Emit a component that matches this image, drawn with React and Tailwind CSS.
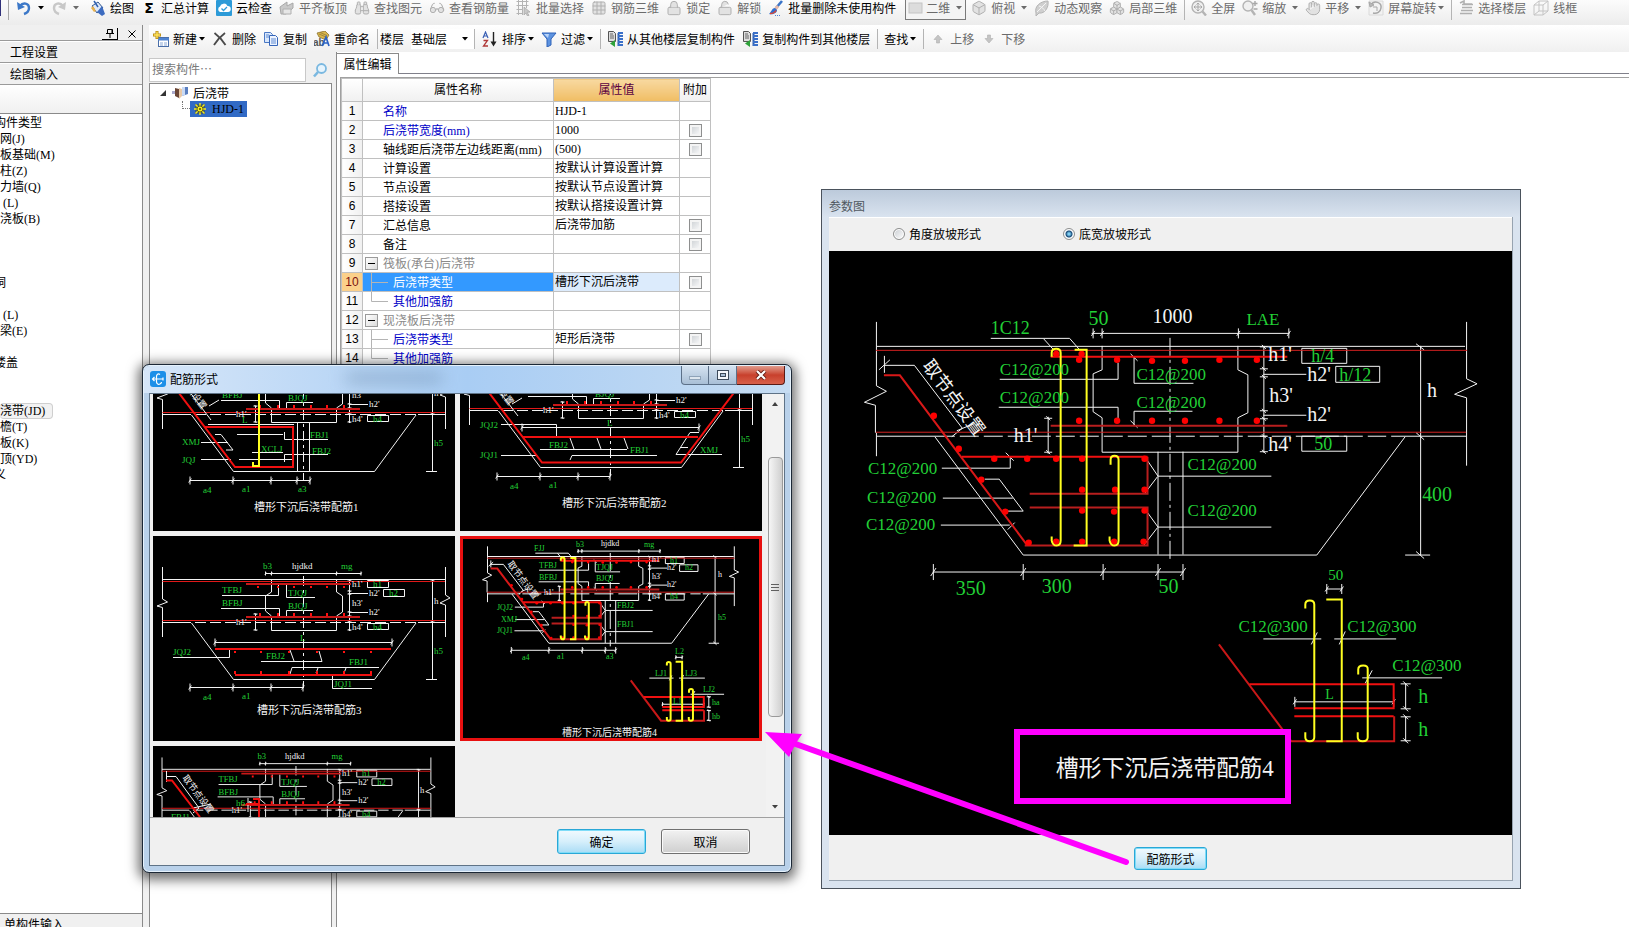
import React, { useState } from 'react'
import { Box, Boxes, Binoculars, Glasses, Grid3x3, Lock, LockOpen, Hand } from 'lucide-react'

/* ---------- small icons ---------- */

const Caret = ({ className = '' }) => (
  <svg viewBox="0 0 6 4" className={`h-1 w-1.5 shrink-0 ${className}`} aria-hidden="true">
    <path d="M0 0h6L3 3.6z" fill="currentColor" />
  </svg>
)

const Svg = ({ children }) => (
  <svg viewBox="0 0 16 16" className="size-4 shrink-0" aria-hidden="true">{children}</svg>
)

const UndoIcon = ({ color }) => (
  <Svg>
    <path d="M4 6c3-4 9-3 9 2 0 3-2 5-5 6" fill="none" stroke={color} strokeWidth="2.4" />
    <path d="M1 2l1 8 7-3z" fill={color} />
  </Svg>
)
const RedoIcon = ({ color }) => (
  <Svg>
    <path d="M12 6C9 2 3 3 3 8c0 3 2 5 5 6" fill="none" stroke={color} strokeWidth="2.4" />
    <path d="M15 2l-1 8-7-3z" fill={color} />
  </Svg>
)
const PaintIcon = () => (
  <Svg>
    <path d="M2 6l6-4 5 6-6 5z" fill="#dfe9f8" stroke="#33588f" />
    <path d="M4 1l4 6" stroke="#2d5fb0" strokeWidth="1.5" />
    <path d="M7 12l5-6 3 8-3 2z" fill="#3d6cc0" />
    <path d="M1 8l3 4 2-1-3-5z" fill="#e8b04a" />
  </Svg>
)
const CloudCheckIcon = () => (
  <Svg>
    <rect width="16" height="16" rx="1" fill="#2d9bd8" />
    <path d="M4 12a3 3 0 010-5.500 4 4 0 017.500-.5A3 3 0 0112 12z" fill="#fff" />
    <path d="M5.500 8.500l2 2 3.500-3.500" fill="none" stroke="#2d9bd8" strokeWidth="1.300" />
  </Svg>
)
const BrushIcon = () => (
  <Svg>
    <path d="M14 1L8 8" stroke="#3a74c8" strokeWidth="2.600" />
    <path d="M10 6L7 9.500" stroke="#e6b8a8" strokeWidth="3" />
    <path d="M7 8c-3 0-3 3-6 6 4 1 8-1 8-4z" fill="#2f6fd0" />
    <path d="M2 13.500c3 0 5-1 6-3" stroke="#d6483a" strokeWidth="1.600" fill="none" />
    <path d="M7 15.500h6" stroke="#4a86dc" strokeDasharray="1 1" />
  </Svg>
)
const SlabIcon = () => (
  <Svg>
    <path d="M1 7l7-5v4l6-3v5l-7 6H2z" fill="#c9c9c9" stroke="#a8a8a8" />
    <path d="M4 9h8v5H4z" fill="#e6e6e6" stroke="#b0b0b0" />
  </Svg>
)
const BatchSelectIcon = () => (
  <Svg>
    <path d="M.5 1.500h12M.5 5.500h12M.5 9.500h6M.5 13.500h6M2.500 0v15M6.500 0v15M10.500 0v8" stroke="#b4b4b4" fill="none" />
    <path d="M8 7l6 5-3 .3 2 3-1.500.7-1.700-3-1.800 2z" fill="#c8c8c8" stroke="#a4a4a4" strokeWidth=".7" />
  </Svg>
)
const ObserveIcon = () => (
  <Svg>
    <path d="M2 13C0 6 7 1 14 1c1 6-3 13-9 12l-3 3z" fill="#cfcfcf" stroke="#b4b4b4" />
    <path d="M3 12C6 9 9 6 12 3M5 6c3 1 5 3 6 5" stroke="#f4f4f4" fill="none" />
  </Svg>
)
const FullScreenIcon = () => (
  <Svg>
    <circle cx="7" cy="7" r="6" fill="#f0f0f0" stroke="#b4b4b4" strokeWidth="1.400" />
    <path d="M7 3v8M3 7h8M5.500 4.500L7 3l1.500 1.500M5.500 9.500L7 11l1.500-1.500M4.500 5.500L3 7l1.500 1.500M9.500 5.500L11 7 9.500 8.500" stroke="#a8a8a8" fill="none" />
    <path d="M11.500 11.500l3.500 4" stroke="#b4b4b4" strokeWidth="2.400" />
  </Svg>
)
const ZoomIcon = () => (
  <Svg>
    <circle cx="6" cy="6" r="5" fill="#f0f0f0" stroke="#b4b4b4" strokeWidth="1.400" />
    <path d="M9.500 10l3.500 5" stroke="#b4b4b4" strokeWidth="2.400" />
    <path d="M13 1v5M10.500 3.500h5M11.500 9h4" stroke="#a8a8a8" strokeWidth="1.400" />
  </Svg>
)
const RotateIcon = () => (
  <Svg>
    <path d="M1 1h14v14H1z" fill="#f2f2f2" stroke="#dadada" />
    <path d="M3 5c3-5 11-3 10 3-.5 4-4 6-8 5" fill="none" stroke="#a8a8a8" strokeWidth="1.500" />
    <path d="M1 2l1 5 4-2zM5 7h4M9 7v4" stroke="#a8a8a8" fill="#b8b8b8" />
  </Svg>
)
const FloorSelectIcon = () => (
  <Svg>
    <path d="M2 3l4-2v3l8 0M4 4.500h11M4 7.500h10M3 10.500h12M2 13.500h12" fill="none" stroke="#b0b0b0" strokeWidth="1.600" />
  </Svg>
)
const WireIcon = () => (
  <Svg>
    <path d="M1 5h9v10H1zM6 1h9v10H6zM1 5l5-4M10 5l5-4M10 15l5-4M1 15l5-4" fill="none" stroke="#c4c4c4" />
  </Svg>
)
const NewIcon = () => (
  <Svg>
    <rect x="5.500" y="6.500" width="10" height="9" fill="#fff" stroke="#4a6ea8" />
    <path d="M5 7h11v2.500H5z" fill="#4f83d0" />
    <path d="M7 12h3M11 12h3M7 14h3M11 14h3" stroke="#8aa8d6" />
    <path d="M4 0v8M0 4h8" stroke="#b88a10" strokeWidth="3" />
    <path d="M4 .8v6.400M.8 4h6.400" stroke="#ffe45c" strokeWidth="1.400" />
  </Svg>
)
const DeleteIcon = () => (
  <Svg>
    <path d="M2.500 2c4 3 8 7 11 12M13 2C9 5 5 9 2 14" stroke="#4a4a4a" strokeWidth="1.800" fill="none" />
  </Svg>
)
const CopyIcon = () => (
  <Svg>
    <path d="M1.500 1.500h6l2 2v8h-8z" fill="#d9e7fb" stroke="#4a78c4" />
    <path d="M6.500 4.500h6l2 2v8h-8z" fill="#eef4ff" stroke="#3565b8" />
    <path d="M8 8h5M8 10h5M8 12h5M3 4h3M3 6h3" stroke="#5f8bd2" />
  </Svg>
)
const RenameIcon = () => (
  <Svg>
    <path d="M3 2l8-2 4 4-3 5-7-3z" fill="#d8b64c" stroke="#8d7430" strokeWidth=".8" />
    <path d="M5 3l7 3M6 1.500l7 3" stroke="#8d7430" strokeWidth=".7" />
    <text x="-1" y="15" fontSize="10" fontWeight="bold" fontFamily="Liberation Sans" fill="#555">ab</text>
    <path d="M8 15l4-9 3 9M9.500 12h5" stroke="#2b62c4" strokeWidth="1.700" fill="none" />
  </Svg>
)
const SortIcon = () => (
  <Svg>
    <path d="M1 7l2.500-6L6 7M2 5h3" stroke="#3a5fb4" strokeWidth="1.200" fill="none" />
    <path d="M1.500 9.500h4l-4 5.500h4.500" stroke="#b03a3a" strokeWidth="1.300" fill="none" />
    <path d="M11.500 1v12" stroke="#222" strokeWidth="1.400" />
    <path d="M8.500 10.500h6l-3 5z" fill="#222" />
  </Svg>
)
const FilterIcon = () => (
  <Svg>
    <path d="M1 2h14L10 8v6l-4 2V8z" fill="#5d93e0" stroke="#2e62b8" />
    <path d="M3 3h5l-1 4z" fill="#b9d4f8" />
  </Svg>
)
const FloorCopyIcon = () => (
  <Svg>
    <path d="M1.500 .5h5l2 2v8h-7z" fill="#ddd" stroke="#555" />
    <path d="M3 3h3M3 5h4M3 7h4" stroke="#666" />
    <path d="M11.500 2v13" stroke="#2f5fb0" strokeWidth="2" />
    <path d="M11 2h5M11 5h5M11 8h5M11 11h5M11 14h5" stroke="#3a6fc8" strokeWidth="1.800" />
    <path d="M8 9v7l-5-3.500z" fill="#2fa33a" />
  </Svg>
)
const ArrowIcon = ({ down }) => (
  <Svg>
    <path d={down ? 'M8 12L4 7.500h2.500V4h3v3.500H12z' : 'M8 4l4 4.500H9.500V12h-3V8.500H4z'} fill="#c4c4c4" stroke="#b0b0b0" strokeWidth=".6" />
  </Svg>
)
const CategoryIcon = () => (
  <Svg>
    <path d="M0 6h3v3H0z" fill="#aac" />
    <path d="M3 3l4 1v9l-4-2z" fill="#6a4636" />
    <path d="M7 3l3 1v7l-3 3z" fill="#e8c9a8" />
    <path d="M10 2h6v7l-6 2z" fill="#5a7fc0" />
    <path d="M10 2h3v8l-3 1z" fill="#c9daf5" />
  </Svg>
)
const SunIcon = () => (
  <svg viewBox="0 0 12 12" className="size-3 shrink-0" aria-hidden="true">
    <rect x="1" y="1" width="10" height="10" fill="#4a4a20" opacity=".5" />
    <path d="M6 0v12M0 6h12M1.500 1.500l9 9M10.500 1.500l-9 9" stroke="#f6ee1e" strokeWidth="1.400" />
    <circle cx="6" cy="6" r="3" fill="#f6ee1e" stroke="#4a4a10" strokeWidth=".8" />
    <circle cx="6" cy="6" r="1" fill="#4a4a10" />
  </svg>
)
const SearchIcon = () => (
  <Svg>
    <circle cx="9.500" cy="6.500" r="4.500" fill="#e6f4fd" stroke="#7ab8e0" strokeWidth="1.800" />
    <path d="M6 10l-4 4.500" stroke="#7ab8e0" strokeWidth="2.600" />
  </Svg>
)
const AppIcon = () => (
  <Svg>
    <rect width="16" height="16" rx="3" fill="#1c8fe8" />
    <path d="M10 3.500c-2-1.500-3.500 0-3.500 2v5c0 2 1.500 3.500 3.500 2.500 1-.5 1.500-1.500 1.500-2M2.500 8h10.500M4.500 6L2.500 8l2 2M13 6.500v3" fill="none" stroke="#fff" strokeWidth="1.200" />
  </Svg>
)

/* ---------- toolbars ---------- */

const Tool = ({ icon, label, caret, caretGap = 'ml-1.5', muted, name }) => (
  <button
    type="button"
    aria-label={label ? undefined : name}
    className={`flex h-4 shrink-0 items-center whitespace-nowrap ${muted ? 'text-[#6b6b6b]' : 'text-black'}`}
  >
    {icon}
    {label && <span className={icon ? 'ml-1' : ''}>{label}</span>}
    {caret && <Caret className={caretGap} />}
  </button>
)

const Sep = () => <span className="-mr-px h-5 w-px shrink-0 bg-[#b4b4b4]" />

const gray = (Icon) => <Icon size={16} strokeWidth={1.500} color="#b0b0b0" fill="#e2e2e2" className="shrink-0" aria-hidden="true" />

const ViewToolbar = () => (
  <header className="flex h-[25px] shrink-0 items-start gap-[7px] bg-gradient-to-b from-[#fcfcfc] to-[#ececec]">
    <div className="flex items-start gap-[7px] pr-1">
      <span className="h-4 w-px bg-[#31317a]" />
      <span className="h-5 w-px bg-[#a8a8a8]" />
      <Tool icon={<UndoIcon color="#3c78c8" />} name="撤销" caret />
      <Tool icon={<RedoIcon color="#c8c8c8" />} name="恢复" caret muted />
    </div>
    <Tool icon={<PaintIcon />} label="绘图" />
    <Tool icon={<span className="w-4 text-center font-['DejaVu_Sans',sans-serif] text-sm font-bold">Σ</span>} label="汇总计算" />
    <Tool icon={<CloudCheckIcon />} label="云检查" />
    <Tool icon={<SlabIcon />} label="平齐板顶" muted />
    <Tool icon={gray(Binoculars)} label="查找图元" muted />
    <Tool icon={gray(Glasses)} label="查看钢筋量" muted />
    <Tool icon={<BatchSelectIcon />} label="批量选择" muted />
    <Tool icon={gray(Grid3x3)} label="钢筋三维" muted />
    <Tool icon={gray(Lock)} label="锁定" muted />
    <Tool icon={gray(LockOpen)} label="解锁" muted />
    <Tool icon={<BrushIcon />} label="批量删除未使用构件" />
    <button type="button" className="-mr-0.5 ml-0.5 flex h-5 w-[61px] shrink-0 items-start border border-t-0 border-[#7a7a7a] bg-[#f4f4f4] pl-0.5 text-[#6b6b6b]">
      <Svg><rect x="1" y="3" width="13" height="10" fill="#dcdcdc" stroke="#c4c4c4" /></Svg>
      <span className="ml-0.5">二维</span>
      <Caret className="mt-1.5 ml-1.5" />
    </button>
    <Tool icon={gray(Box)} label="俯视" caret muted />
    <Tool icon={<ObserveIcon />} label="动态观察" muted />
    <Tool icon={gray(Boxes)} label="局部三维" muted />
    <Sep />
    <Tool icon={<FullScreenIcon />} label="全屏" muted />
    <Tool icon={<ZoomIcon />} label="缩放" caret muted />
    <Tool icon={gray(Hand)} label="平移" caret muted />
    <Tool icon={<RotateIcon />} label="屏幕旋转" caret caretGap="ml-0.5" muted />
    <Sep />
    <Tool icon={<FloorSelectIcon />} label="选择楼层" muted />
    <Tool icon={<WireIcon />} label="线框" muted />
  </header>
)

const ComponentToolbar = () => (
  <div className="flex h-[27px] shrink-0 items-center gap-[7px] bg-gradient-to-b from-white to-[#f0f0f0] pl-1">
    <Tool icon={<NewIcon />} label="新建" caret caretGap="ml-0.5" />
    <Tool icon={<DeleteIcon />} label="删除" />
    <Tool icon={<CopyIcon />} label="复制" />
    <Tool icon={<RenameIcon />} label="重命名" />
    <Sep />
    <label htmlFor="floor" className="-ml-1 shrink-0">楼层</label>
    <div className="flex h-5 w-[64px] shrink-0 items-center border-r border-[#b4b4b4] bg-white">
      <select id="floor" className="w-full appearance-none bg-transparent outline-none" defaultValue="基础层">
        <option>基础层</option>
      </select>
      <Caret className="mr-1.5" />
    </div>
    <Tool icon={<SortIcon />} label="排序" caret caretGap="ml-0.5" />
    <Tool icon={<FilterIcon />} label="过滤" caret caretGap="ml-0.5" />
    <Sep />
    <Tool icon={<FloorCopyIcon />} label="从其他楼层复制构件" />
    <Tool icon={<FloorCopyIcon />} label="复制构件到其他楼层" />
    <Sep />
    <Tool label="查找" caret caretGap="ml-0.5" />
    <Sep />
    <Tool icon={<ArrowIcon />} label="上移" muted />
    <Tool icon={<ArrowIcon down />} label="下移" muted />
  </div>
)

/* ---------- left navigation ---------- */

const NAV = [
  ['构件类型', 1], ['网(J)'], ['板基础(M)'], ['柱(Z)'], ['力墙(Q)'], ['(L)', 2], ['浇板(B)'],
  [''], [''], [''], ['洞', 1], [''], ['(L)', 2], ['梁(E)'], [''], ['楼盖', 1], [''], [''],
  ['浇带(JD)', 3], ['檐(T)'], ['板(K)'], ['顶(YD)'], ['义', 1],
]
const NAV_STYLE = ['', '-ml-1.5', 'ml-[3px]', '']

const NavPanel = () => (
  <aside className="flex w-[143px] shrink-0 flex-col border-r border-[#8a8a8a] bg-[#f0f0f0]">
    <div className="mt-0.5 flex h-[14px] items-center justify-end gap-2 border-b border-[#9a9a9a] pr-1">
      <button type="button" aria-label="固定" className="flex h-3 w-4 items-center justify-center border-r border-b border-black">
        <svg viewBox="0 0 10 10" className="size-2.5"><path d="M2.500 1.500h5v4h-5zM1 5.500h8M5 5.500V10M7 1.500v4" fill="none" stroke="#000" /></svg>
      </button>
      <button type="button" aria-label="关闭" className="flex w-3 justify-center">
        <svg viewBox="0 0 8 8" className="size-2"><path d="M.5.5l7 7M7.500.5l-7 7" stroke="#000" /></svg>
      </button>
    </div>
    <button type="button" className="flex h-[22px] items-center border-b border-[#9a9a9a] border-t border-t-white pl-2.5">工程设置</button>
    <button type="button" className="flex h-[22px] items-center border-b border-[#9a9a9a] border-t border-t-white pl-2.5">绘图输入</button>
    <div className="h-[28px] bg-gradient-to-b from-white to-[#f0f0f0]" />
    <ul className="flex-1 overflow-hidden border-t border-[#8a8a8a] bg-white pt-px font-['Liberation_Serif','Noto_Sans_CJK_SC',serif]">
      {NAV.map(([text, kind = 0], i) => (
        <li key={i} className="h-4">
          {text && (
            <a href="#nav" className={`inline-block h-4 whitespace-nowrap leading-4 ${kind === 3 ? 'w-[53px] rounded-sm border border-l-0 border-[#cfcfcf] bg-[#f2f2f2] leading-[14px]' : ''} ${NAV_STYLE[kind]}`}>
              {text}
            </a>
          )}
        </li>
      ))}
    </ul>
    <button type="button" className="h-[14px] overflow-hidden border-t border-[#8a8a8a] pt-0.5 pl-1 text-left">单构件输入</button>
  </aside>
)

/* ---------- component tree ---------- */

const TreePanel = () => (
  <section className="flex w-[183px] shrink-0 flex-col">
    <div className="mt-1.5 flex h-6 shrink-0 items-center">
      <input
        type="text"
        aria-label="搜索构件"
        placeholder="搜索构件…"
        className="h-6 w-[157px] border border-[#c8c8c8] bg-white pb-1 pl-0.5 text-xs outline-none placeholder:text-[#7a7a7a]"
      />
      <button type="button" aria-label="搜索" className="ml-1.5"><SearchIcon /></button>
    </div>
    <div className="mt-px flex-1 border border-[#8a8a8a] border-b-0 bg-white">
      <div className="flex h-[17px] items-center pl-2.5">
        <svg viewBox="0 0 6 6" className="size-1.5"><path d="M6 0v6H0z" fill="#333" /></svg>
        <span className="ml-1.5"><CategoryIcon /></span>
        <span className="ml-[5px]">后浇带</span>
      </div>
      <div className="flex h-4 items-center pl-8">
        <span className="h-2 w-2 self-start border-b border-l border-dotted border-[#777]" />
        <button type="button" className="flex h-4 w-[57px] items-center bg-[#316ac5] pl-1 font-['Liberation_Serif',serif]">
          <SunIcon />
          <span className="ml-1.5">HJD-1</span>
        </button>
      </div>
    </div>
  </section>
)

/* ---------- property grid ---------- */

const ROWS = [
  { name: '名称', value: 'HJD-1', blue: true },
  { name: '后浇带宽度(mm)', value: '1000', blue: true, box: true },
  { name: '轴线距后浇带左边线距离(mm)', value: '(500)', box: true },
  { name: '计算设置', value: '按默认计算设置计算' },
  { name: '节点设置', value: '按默认节点设置计算' },
  { name: '搭接设置', value: '按默认搭接设置计算' },
  { name: '汇总信息', value: '后浇带加筋', box: true },
  { name: '备注', value: '', box: true },
  { name: '筏板(承台)后浇带', value: '', group: true },
  { name: '后浇带类型', value: '槽形下沉后浇带', blue: true, box: true, child: 'mid', active: true },
  { name: '其他加强筋', value: '', blue: true, child: 'end' },
  { name: '现浇板后浇带', value: '', group: true },
  { name: '后浇带类型', value: '矩形后浇带', blue: true, box: true, child: 'mid' },
  { name: '其他加强筋', value: '', blue: true, child: 'end' },
]

const NameCell = ({ row }) => (
  <div className="flex h-[18px] items-center whitespace-nowrap">
    <span className={`flex h-full shrink-0 items-center ${row.child ? 'w-[30px]' : 'w-5'}`}>
      {row.group && (
        <button type="button" aria-label="折叠" className="ml-0.5 flex size-[13px] items-center justify-center border border-[#9a9a9a] bg-gradient-to-br from-white to-[#dcdcdc]">
          <span className="h-px w-[7px] bg-black" />
        </button>
      )}
      {row.child && (
        <svg viewBox="0 0 30 18" className="h-[18px] w-[30px]" aria-hidden="true">
          <path d={row.child === 'mid' ? 'M8.500 0v18M8.500 9.500H25' : 'M8.500 0v9.500H25'} fill="none" stroke="#b4b4b4" />
        </svg>
      )}
    </span>
    <span className="pt-px">{row.name}</span>
  </div>
)

const PropertyTable = () => (
  <table className="w-[370px] table-fixed border-collapse border-[#c0c0c0] text-left font-['Liberation_Serif','Noto_Sans_CJK_SC',serif] text-xs leading-4 [&_td]:border [&_td]:border-[#c0c0c0] [&_td]:p-0 [&_th]:border [&_th]:border-[#c0c0c0] [&_th]:p-0 [&_th]:font-normal">
    <colgroup>
      <col className="w-[21px]" /><col className="w-[191px]" /><col className="w-[126px]" /><col />
    </colgroup>
    <thead>
      <tr className="h-[23px] bg-gradient-to-b from-white to-[#f0f0f0] text-center">
        <th></th>
        <th>属性名称</th>
        <th className="bg-gradient-to-b from-[#f8d9a0] to-[#f0bd62] text-[#5a0040]">属性值</th>
        <th>附加</th>
      </tr>
    </thead>
    <tbody>
      {ROWS.map((r, i) => (
        <tr key={i} className="h-[19px]">
          <th className={`text-center font-['Liberation_Sans',sans-serif] leading-4 ${r.active ? 'bg-[#fbd08a] text-[#7a1010]' : 'bg-gradient-to-r from-white to-[#f0f0f0]'}`}>{i + 1}</th>
          <td className={r.active ? 'bg-[#3399ff] text-white' : r.group ? 'text-[#8a8a8a]' : r.blue ? 'text-[#0000c8]' : ''}>
            <NameCell row={r} />
          </td>
          <td className={r.active ? 'bg-[#dcebfc]' : ''}><span className="block pl-px whitespace-nowrap">{r.value}</span></td>
          <td>
            {r.box && (
              <input
                type="checkbox"
                aria-label={`附加 ${r.name}`}
                className="mx-auto block size-[13px] appearance-none border border-[#8e8f8f] bg-gradient-to-br from-[#c8ccd0] to-white shadow-[inset_0_0_0_2px_#f4f4f4]"
              />
            )}
          </td>
        </tr>
      ))}
    </tbody>
  </table>
)

/* ---------- CAD drawings ---------- */

const G = '#22d036'
const W = '#f4f4f4'
const R = '#f01010'
const DR = '#b81e1e'
const Y = '#ffff20'
const CAD = "'Liberation Serif','Noto Sans CJK SC',serif"

const Labels = ({ items, size }) => (
  <g fontFamily={CAD} fontSize={size}>
    {items.map(([x, y, text, white, own], i) => (
      <text key={i} x={x} y={y} fill={white ? W : G} fontSize={own || size}>{text}</text>
    ))}
  </g>
)

const ticksH = (y, xs, r) => xs.map((x) => `M${x} ${y - r}v${2 * r}M${x - r / 3} ${y + r / 2}l${r / 1.5} ${-r}`).join('')
const ticksV = (x, ys, r) => ys.map((y) => `M${x - r} ${y}h${2 * r}M${x - r / 2} ${y - r / 2}l${r} ${r}`).join('')

const DOTS = [
  [1056.5, 354], [1082, 354], [1079.5, 360], [1117.5, 360], [1152.5, 361], [1185.5, 361], [1220, 360], [1257.5, 360],
  [1079.5, 421], [1117.5, 421], [1152.5, 421], [1185.5, 421], [1220, 421], [1257.5, 421],
  [934, 416], [959, 449], [981.5, 480], [1005.5, 512], [1029, 543],
  [994.5, 459], [1027.5, 459], [1056.5, 459], [1082.5, 459], [1145, 459],
  [1082.5, 490], [1115.5, 490], [1145, 490], [1082.5, 511], [1114.5, 512], [1145, 511],
  [1056.5, 542], [1082.5, 542], [1114.5, 542], [1144, 542],
]

const SinkLines = () => (
  <g fill="none" className="[&_path]:[vector-effect:non-scaling-stroke]">
    <g stroke={W} strokeWidth="1">
      <path d="M876.500 322V386L886.500 391.500L864.500 402.500L875.500 405.500V433M876.500 433V456.500" />
      <path d="M1467.500 322V379L1478 384L1455.500 394.500L1467.500 398V466" />
      <path d="M877 346.500H1466M877 436.500H955M1392 436.500H1467" />
      <path d="M960 436.500H1387" strokeDasharray="19 5" />
      <path d="M884.500 356V373M884.500 365.500H914.500L962.500 428.500L952 437M879 370L890 360M957 431L974 424" />
      <path d="M935 437L1023.500 555.500H1317.500L1406 437" />
      <path d="M1102.500 346V370L1093.500 374V412L1102.500 418V452.500H1238.500V418L1248.500 413V375L1238.500 370V346" />
      <path d="M1170.500 338V563" strokeDasharray="18 4 3 4" />
      <path d="M1158.500 452V555M1183.500 452V555" />
      <path d={`M1092 333.500H1290${ticksH(333.5, [1093.5, 1102.5, 1239, 1289.5], 5)}`} />
      <path d="M991 338.500H1070L1080 350M1044 339L1054 350" />
      <path d="M1000 379.500H1118.500V363M999 407.500H1118.500V420M1194 383.500H1134.500V357M1193 411.500H1134.500V426M1131 354L1138 361M1131 421L1138 428" />
      <path d={`M1048.500 417V454${ticksV(1048.5, [418.5, 452.5], 4)}`} />
      <path d="M942 468.500H1010.500V457M1006 453L1014 461M943 498.500H1013M985 479.500H999.500L1023.500 511.500H1007M941 525.500H1010M1008 530L1015 523" />
      <path d="M1148 461L1158.500 476.500H1272M1158 477L1145 494M1148 513L1158.500 527.500H1272M1158 528L1144 546" />
      <path d={`M933 572.500H1184${ticksH(572.5, [933.5, 1023.5, 1103.5, 1158.5, 1183.5], 8)}`} />
      <path d={`M1264.500 346V453${ticksV(1264.5, [347, 369, 377, 411, 419, 436.5, 452], 4)}M1264 374.500H1307M1264 415.500H1307`} />
      <path d="M1302.500 348.500h45v15h-45zM1336.500 366.500h44v16h-44zM1302.500 436.500h45v15h-45z" />
      <path d="M1421.500 346V555.500M1406 555.500H1431M1417 344L1425 350M1417 433L1425 440M1417 552L1425 559" />
      <path d={`M1327.500 589.500H1343${ticksH(589.5, [1327.5, 1342.5], 5)}`} />
      <path d="M1264 639.500H1322M1335 639.500H1397M1363 678.500H1443M1312 645L1318 633M1340 645L1346 632M1366 684L1373 671" />
      <path d={`M1295 702.500H1394${ticksH(702.5, [1295.5, 1394.5], 5)}`} />
      <path d={`M1406.500 684V709M1406.500 717V742${ticksV(1406.5, [684.5, 709.5, 717.5, 741.5], 5)}`} />
    </g>
    <g stroke={DR} strokeWidth="2">
      <path d="M876 350.500H1468M876 432.500H1467" strokeWidth="1" stroke="#d02020" />
      <path d="M1051 426H1288M1030 494H1148V457M1030 508H1148V546H1025" />
      <path d="M884 375.500H900L1027 545" stroke="#d81818" />
      <path d="M1219.500 645L1292 742H1395V717" stroke="#c81818" />
    </g>
    <g stroke={R} strokeWidth="2">
      <path d="M1051 357H1288M962 457H1148M1250 685H1394.500V709H1295M1295 717H1394.500" />
    </g>
    <g fill="#ff0000">
      {DOTS.map(([x, y], i) => <circle key={i} cx={x} cy={y} r="3.200" />)}
    </g>
    <g stroke={Y} strokeWidth="2">
      <path d="M1052 357V353Q1052 349 1056.500 349T1061 353V541Q1061 546 1057 546T1052 541V537" />
      <path d="M1075 350H1087V546H1074" />
      <path d="M1111 465V460Q1111 456 1115 456T1119 460V541Q1119 546 1115 546T1110 541V537" />
      <path d="M1306 609V605Q1306 601 1310.500 601T1315 605V738Q1315 742 1310.500 742T1306 738V733" />
      <path d="M1327 600H1342.500V742H1327" />
      <path d="M1359 675V670Q1359 666 1364 666T1368.500 670V738Q1368.500 742 1363.500 742T1358.500 738V733" />
    </g>
  </g>
)

const MAIN_LABELS = [
  [1089, 325, '50'], [1153, 323, '1000', true], [1247, 325, 'LAE', false, 17], [991, 334, '1C12', false, 18],
  [1014, 442, "h1'", true], [1269, 361, "h1'", true], [1308, 381, "h2'", true], [1270, 402, "h3'", true],
  [1308, 421, "h2'", true], [1269, 451, "h4'", true],
  [1312, 362, 'h/4', false, 18], [1340, 381, 'h/12', false, 18], [1315, 450, '50', false, 18],
  [1428, 397, 'h', true], [1423, 501, '400'],
  [956, 596, '350'], [1042, 594, '300'], [1159, 594, '50'],
  [1419, 704, 'h'], [1419, 737, 'h'],
]
const MAIN_BAR_LABELS = [
  [1000, 375, 'C12@200'], [1000, 403, 'C12@200'], [1137, 380, 'C12@200'], [1137, 408, 'C12@200'],
  [868, 474, 'C12@200'], [867, 503, 'C12@200'], [866, 530, 'C12@200'],
  [1188, 470, 'C12@200'], [1188, 516, 'C12@200'],
  [1239, 633, 'C12@300'], [1348, 633, 'C12@300'], [1393, 672, 'C12@300'],
  [1329, 580, '50', false, 15], [1326, 700, 'L', false, 14],
]

const THUMB4_LABELS = [
  [74, 15, 'FJJ'], [116, 11, 'b3'], [141, 10, 'hjdkd', true], [184, 11, 'mg'],
  [79, 32, 'TFBJ'], [79, 44, 'BFBJ'], [136, 34, 'TJQJ'], [136, 45, 'BJQJ'], [84, 59, "h1'", true],
  [37, 74, 'JQJ2'], [41, 86, 'XMJ'], [37, 97, 'JQJ1'], [157, 72, 'FBJ2'], [157, 91, 'FBJ1'],
  [192, 26, "h1'", true], [210, 27, 'h1'], [207, 34, "h2'", true], [225, 34, 'h2'], [192, 43, "h3'", true],
  [207, 51, "h2'", true], [192, 63, "h4'", true], [210, 63, 'h4'], [258, 41, 'h', true], [258, 84, 'h5'],
  [62, 124, 'a4'], [97, 123, 'a1'], [146, 123, 'a3'], [215, 118, 'L2'], [195, 140, 'LJ1'], [225, 140, 'LJ3'],
  [243, 156, 'LJ2'], [213, 168, 'L1'], [252, 169, 'ha'], [252, 183, 'hb'],
]

const SlopeNote = ({ x, y, size }) => (
  <text x={x} y={y} transform={`rotate(53 ${x} ${y})`} fontSize={size} fill={W} fontFamily={CAD}>取节点设置</text>
)

/* Upper slab section shared by the small previews */
const SlabSection = () => (
  <g>
    <g fill="none" stroke={W}>
      <path d="M9.500 31V63L14.500 66L4 70L9.500 71.500V101M292.500 31V59L297 62L287 67L292.500 69V101" />
      <path d="M9.500 43.500H292M9.500 86.500H38M265 86.500H292" />
      <path d="M42 86.500H263" strokeDasharray="11 4" />
      <path d={`M112 37.500H208${ticksH(37.5, [112.5, 118.5, 183.5, 208], 2)}`} />
      <path d="M118.500 43V56L112.500 60V75L118.500 80V94.500H183.500V80L189.500 76V60L183.500 56V43" />
      <path d="M150.500 40V152" strokeDasharray="10 4 3 4" />
      <path d="M69 59.500H125.500V49M68 72.500H126.500V80M162 61.500H133.500V49M160 74.500H133.500V81" />
      <path d={`M102.500 78V94${ticksV(102.5, [78, 94], 2)}`} />
      <path d={`M196.500 43V95${ticksV(196.5, [44, 55, 58, 76, 80, 86, 94], 2)}M197 57.500H215M197 76.500H215`} />
      <path d="M214.500 44.500h21v7h-21zM230.500 53.500h21v7h-21zM214.500 87.500h21v6h-21z" />
      <path d={`M279.500 43V143M273 143.500H284${ticksV(279.5, [44, 86], 2)}`} />
      <path d="M38.500 87L80.500 143.500H221.500L263 87" />
    </g>
    <path d="M9.500 45.500H292M9.500 84.500H292" stroke="#e01818" />
    <path d="M93 48H198M93 81H207" stroke="#c81818" strokeWidth="2" />
    <path d="M105 50v2M125 50v2M141 50v2M158 50v2M174 50v2M191 50v2M107 77v3M125 77v3M141 77v3M158 77v3M174 77v3M191 77v3" stroke="#ff1010" strokeWidth="2" />
    <Labels size={9} items={[
      [110, 33, 'b3'], [139, 33, 'hjdkd', true], [188, 33, 'mg'],
      [69, 57, 'TFBJ'], [69, 70, 'BFBJ'], [135, 60, 'TJQJ'], [135, 73, 'BJQJ'], [83, 89, "h1'", true],
      [199, 51, "h1'", true], [220, 51, 'h1'], [216, 60, "h2'", true], [236, 60, 'h2'], [199, 70, "h3'", true],
      [216, 79, "h2'", true], [199, 94, "h4'", true], [220, 94, 'h4'], [281, 68, 'h', true], [281, 118, 'h5'],
    ]} />
  </g>
)

const BottomDims = ({ y, ticks }) => (
  <>
    <path d={`M37 ${y}H${ticks[ticks.length - 1]}${ticksH(y, ticks, 4)}`} fill="none" stroke={W} />
    <Labels size={9} items={[[50, y + 12, 'a4'], [89, y + 11, 'a1']]} />
  </>
)

const Thumb1 = () => (
  <>
    <g transform="translate(0 2)"><SlabSection /></g>
    <g fill="none" stroke={W}>
      <path d="M17 40L58 94M55 98.500H141M56 80L66 74M48 116.500H75M62 108.500H68L80 124H73M48 133.500H78M175 113.500H131.500V106M175 128.500H131.500V136M99 126.500H130M144.500 97V145M156.500 97V145M84 108.500H130M86 133.500H140" />
    </g>
    <path d="M10 46L82 141H140V101H52" fill="none" stroke={R} strokeWidth="2" />
    <path d="M106 40V140H100V136" fill="none" stroke={Y} strokeWidth="2" />
    <SlopeNote x={22} y={48} size={9} />
    <BottomDims y={154.5} ticks={[37, 80, 118, 144, 157]} />
    <Labels size={9} items={[[89, 97, 'L'], [29, 119, 'XMJ'], [29, 137, 'JQJ'], [157, 112, 'FBJ1'], [159, 128, 'FBJ2'], [108, 126, 'XCLJ'], [145, 166, 'a3'], [101, 185, '槽形下沉后浇带配筋1', true, 11]]} />
  </>
)

const Thumb2 = () => (
  <>
    <g transform="translate(0 -2)"><SlabSection /></g>
    <g fill="none" stroke={W}>
      <path d={`M62 101.500H239${ticksH(101.5, [62, 239], 4)}`} />
      <path d="M17 36L58 90M52 78L62 72M41 98.500H96.500V110M41 129.500H77M80 123.500H167M110 134L112 129.500H197M110 112L114 123M137 112L141 123M164 112L168 123M262 128.500H216L230 106.500H239M220 121.500H228" />
    </g>
    <path d="M8 39L82 136.500H221L295 39M62 111H238" fill="none" stroke={R} strokeWidth="2" />
    <SlopeNote x={22} y={44} size={9} />
    <BottomDims y={150.5} ticks={[37, 80, 118, 150]} />
    <Labels size={9} items={[[147, 100, 'L'], [20, 102, 'JQJ2'], [20, 132, 'JQJ1'], [89, 122, 'FBJ2'], [170, 127, 'FBJ1'], [240, 127, 'XMJ'], [102, 181, '槽形下沉后浇带配筋2', true, 11]]} />
  </>
)

const Thumb3 = () => (
  <>
    <SlabSection />
    <g fill="none" stroke={W}>
      <path d={`M62 106.500H239${ticksH(106.5, [62, 239], 4)}`} />
      <path d="M20 121.500H76.500V113M108 125.500H169L166 115M137 114L141 125M137 138L139 131.500H226M165 132L163 137M193 132L191 137M219 152.500H179.500V139" />
    </g>
    <path d="M62 113H238M82 139H219" stroke={R} strokeWidth="2" />
    <path d="M82 115v2M108 115v2M136 115v2M164 115v2M191 115v2M218 115v2M82 135v3M108 135v3M136 135v3M164 135v3M191 135v3M218 135v3" stroke="#ff1010" strokeWidth="2" />
    <BottomDims y={151.5} ticks={[37, 80, 118, 150]} />
    <Labels size={9} items={[[147, 105, 'L'], [20, 119, 'JQJ2'], [113, 123, 'FBJ2'], [196, 129, 'FBJ1'], [181, 151, 'JQJ1'], [104, 178, '槽形下沉后浇带配筋3', true, 11]]} />
  </>
)

const Thumb4 = () => (
  <>
    <g transform="translate(27.500 20.500) scale(.4176 .415) translate(-876.500 -346.500)"><SinkLines /></g>
    <SlopeNote x={47} y={28} size={9} />
    <Labels size={8} items={THUMB4_LABELS} />
    <Labels size={10} items={[[102, 200, '槽形下沉后浇带配筋4', true]]} />
  </>
)

const Thumb5 = () => (
  <>
    <g transform="translate(0 -18) scale(.95)"><SlabSection /></g>
    <path d="M13.500 25V36M13 30.500H23L46 62L40 67M40 62L58 58M95 52V66" fill="none" stroke={W} />
    <path d="M13 34.500H19L47 71M100 53H106V71M93 58H106" fill="none" stroke={R} strokeWidth="2" />
    <SlopeNote x={29} y={32} size={9} />
    <Labels size={9} items={[[83, 60, 'h6'], [18, 74, 'FBJ1']]} />
  </>
)

const THUMBS = [Thumb1, Thumb2, Thumb3, Thumb4, Thumb5]

/* ---------- dialogs ---------- */

const primaryBtn = 'border-[#2aa7d6] bg-gradient-to-b from-[#f2fafe] via-[#d6effb] to-[#a9dcf5] shadow-[inset_0_0_0_1px_#7fdcf8]'

const ParamDialog = () => (
  <section className="absolute top-[189px] left-[821px] flex w-[700px] flex-col border border-[#4a525c] bg-[#d9e3ef] px-[7px] pb-[7px]">
    <h2 className="-mx-[7px] flex h-[27px] items-center bg-gradient-to-b from-[#bccadb] to-[#d9e3ef] pt-1 pl-[7px] text-[#505860]">参数图</h2>
    <div className="border-r border-b border-[#97a3b0] bg-[#f0f0f0]">
      <div className="flex h-[34px] items-center gap-[82px] border-t border-white pb-0.5 pl-16">
        {['角度放坡形式', '底宽放坡形式'].map((t, i) => (
          <label key={t} className="flex items-center gap-1">
            <input
              type="radio"
              name="slope"
              defaultChecked={i === 1}
              className="size-3 appearance-none rounded-full border border-[#8e8f8f] bg-gradient-to-br from-[#c9cdd2] to-white shadow-[inset_0_0_0_1px_#fff] checked:bg-[radial-gradient(circle,#7fd0f5_0_1px,#174a78_3px,#e6eef5_4px)]"
            />
            {t}
          </label>
        ))}
      </div>
      <svg viewBox="829 251 684 585" className="block w-full bg-black" role="img">
        <SinkLines />
        <SlopeNote x={922} y={366} size={18} />
        <Labels size={20} items={MAIN_LABELS} />
        <Labels size={17} items={MAIN_BAR_LABELS} />
        <text x="1056" y="777" fontSize="23" fill={W} fontFamily={CAD}>槽形下沉后浇带配筋4</text>
      </svg>
      <div className="flex h-[45px] items-center justify-center pt-0.5">
        <button type="button" className={`h-[23px] w-[73px] rounded-[3px] border ${primaryBtn}`}>配筋形式</button>
      </div>
    </div>
  </section>
)

const RebarDialog = () => {
  const [selected, setSelected] = useState(3)
  return (
    <section className="absolute top-[364px] left-[142px] flex w-[650px] flex-col rounded-[7px] border border-[#1c2836] bg-[#b9d1ea] px-1.5 pb-1.5 shadow-[inset_0_0_0_1px_#e6f2fc,0_3px_12px_4px_rgba(0,0,0,0.55)]">
      <div className="-mx-[5px] mt-px flex h-[27px] rounded-t-[6px] bg-gradient-to-r from-[#d6e6f8] via-[#a9cdf4] to-[#c6dcf2] pl-1.5">
        <h2 className="flex items-center pb-0.5"><AppIcon /><span className="ml-1">配筋形式</span></h2>
        <span className="mt-1.5 ml-32 h-3 w-24 bg-[#5f7f9f]/40 blur-sm" aria-hidden="true" />
        <div className="ml-auto flex h-[19px] pr-[5px]">
          <button type="button" aria-label="最小化" className="flex w-7 items-end justify-center rounded-bl border border-t-0 border-[#5c7088] bg-gradient-to-b from-[#d4e2f0] to-[#a9bfd6] pb-1">
            <span className="h-1 w-3 border border-[#8fa3b8] bg-[#dde6ee]" />
          </button>
          <button type="button" aria-label="最大化" className="flex w-7 items-center justify-center border-r border-b border-[#5c7088] bg-gradient-to-b from-[#d4e2f0] to-[#a9bfd6]">
            <svg viewBox="0 0 12 10" className="h-2.5 w-3"><rect x=".5" y=".5" width="11" height="9" fill="#f4f8fc" stroke="#3c4a5a" /><rect x="3.500" y="3.500" width="5" height="3" fill="#a9bfd6" stroke="#3c4a5a" /></svg>
          </button>
          <button type="button" aria-label="关闭" className="flex w-12 items-center justify-center rounded-br border-r border-b border-[#5a1a14] bg-gradient-to-b from-[#e09a8c] via-[#c8402c] to-[#d8604a]">
            <svg viewBox="0 0 12 10" className="h-2.5 w-3"><path d="M2 1l8 8M10 1L2 9" stroke="#6a2018" strokeWidth="4" /><path d="M2 1l8 8M10 1L2 9" stroke="#fff" strokeWidth="2.200" /></svg>
          </button>
        </div>
      </div>
      <div className="flex flex-col border border-[#5f7387] bg-[#f0f0f0]">
        <div className="flex h-[424px] border-b border-[#a0a0a0]">
          <div className="h-full flex-1 overflow-hidden">
            <div className="-mt-[68px] grid grid-cols-[302px_302px] gap-[5px] pl-[3px]">
              {THUMBS.map((Drawing, i) => (
                <button
                  key={i}
                  type="button"
                  aria-pressed={selected === i}
                  aria-label={`配筋形式 ${i + 1}`}
                  onClick={() => setSelected(i)}
                  className={`h-[205px] overflow-hidden bg-black ${selected === i ? 'outline-3 -outline-offset-3 outline-[#e81010]' : ''}`}
                >
                  <svg viewBox="0 0 302 205" className="block size-full"><Drawing /></svg>
                </button>
              ))}
            </div>
          </div>
          <div className="flex w-[18px] flex-col items-center bg-[#f2f2f2] py-2 text-[#404040]">
            <svg viewBox="0 0 6 4" className="h-1 w-1.5"><path d="M0 4h6L3 0z" fill="currentColor" /></svg>
            <div className="mt-[51px] flex h-[260px] w-[15px] flex-col items-center justify-center gap-0.5 rounded-sm border border-[#9a9a9a] bg-gradient-to-r from-[#f6f6f6] to-[#cfcfcf]">
              <span className="h-px w-2 bg-[#606060]" />
              <span className="h-px w-2 bg-[#606060]" />
              <span className="h-px w-2 bg-[#606060]" />
            </div>
            <Caret className="mt-auto" />
          </div>
        </div>
        <div className="flex h-[47px] items-center justify-end gap-[15px] pr-[34px]">
          <button type="button" className={`h-[25px] w-[89px] rounded-[3px] border ${primaryBtn}`}>确定</button>
          <button type="button" className="h-[25px] w-[89px] rounded-[3px] border border-[#707070] bg-gradient-to-b from-[#f2f2f2] to-[#cfcfcf] shadow-[inset_0_0_0_1px_#fafafa]">取消</button>
        </div>
      </div>
    </section>
  )
}

/* Magenta frame and arrow drawn over both dialogs */
const Annotation = () => (
  <svg viewBox="760 720 540 150" className="pointer-events-none absolute top-[720px] left-[760px] h-[150px] w-[540px]" aria-hidden="true">
    <rect x="1017" y="732" width="271" height="69" fill="none" stroke="#ff00ff" strokeWidth="6" />
    <path d="M1126 862L790 742" stroke="#ff00ff" strokeWidth="6" strokeLinecap="round" />
    <path d="M765 732L802 734L796 743L789 757z" fill="#ff00ff" />
  </svg>
)

export default function App() {
  return (
    <div className="relative flex h-screen flex-col overflow-hidden bg-white font-['Noto_Sans_CJK_SC',sans-serif] text-xs leading-4 text-black">
      <ViewToolbar />
      <div className="flex min-h-0 flex-1">
        <NavPanel />
        <main className="flex min-w-0 flex-1 flex-col bg-[#f0f0f0] pl-1.5">
          <ComponentToolbar />
          <div className="flex min-h-0 flex-1">
            <TreePanel />
            <section className="ml-1 flex min-w-0 flex-1 flex-col border-l border-[#8a8a8a] bg-white">
              <div className="flex h-[22px] shrink-0 items-end">
                <button type="button" role="tab" aria-selected="true" className="h-[21px] w-[62px] shrink-0 border-t border-r border-[#8a8a8a] bg-white">属性编辑</button>
                <span className="h-px flex-1 bg-[#80808a]" />
              </div>
              <div className="mt-[3px] ml-[3px] border-t border-l border-[#a0a0a0]">
                <PropertyTable />
              </div>
            </section>
          </div>
        </main>
      </div>
      <ParamDialog />
      <RebarDialog />
      <Annotation />
    </div>
  )
}
